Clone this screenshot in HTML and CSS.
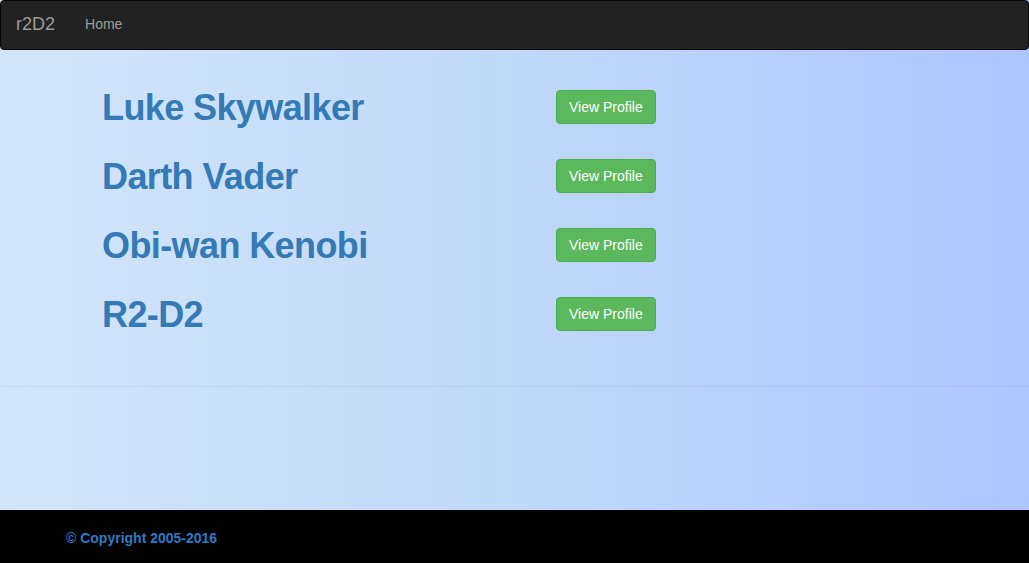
FILE: index.html
```html
<!DOCTYPE html>
<html lang="en">
<head>
<meta charset="utf-8">
<title>r2D2</title>
<link rel="stylesheet" href="styles.css">
</head>
<body>
  <nav class="navbar">
    <a class="brand" href="#">r2D2</a>
    <a class="nav-link" href="#">Home</a>
  </nav>
  <main class="content">
    <div class="person">
      <h1 class="name">Luke Skywalker</h1>
      <a class="btn" href="#">View Profile</a>
    </div>
    <div class="person">
      <h1 class="name">Darth Vader</h1>
      <a class="btn" href="#">View Profile</a>
    </div>
    <div class="person">
      <h1 class="name">Obi-wan Kenobi</h1>
      <a class="btn" href="#">View Profile</a>
    </div>
    <div class="person">
      <h1 class="name">R2-D2</h1>
      <a class="btn" href="#">View Profile</a>
    </div>
  </main>
  <hr class="divider">
  <footer class="footer">
    <p class="copyright">© Copyright 2005-2016</p>
  </footer>
</body>
</html>
```

FILE: styles.css
```css
* { box-sizing: border-box; }

html, body { margin: 0; padding: 0; }

body {
  min-height: 100vh;
  display: flex;
  flex-direction: column;
  font-family: "Liberation Sans", Arial, Helvetica, sans-serif;
  font-size: 14px;
  line-height: 20px;
  background: linear-gradient(to right, #d2e6fa 0%, #c2daf9 45%, #adc6ff 100%);
}

.navbar {
  height: 50px;
  display: flex;
  align-items: flex-start;
  background: #222;
  border: 1px solid #080808;
  border-radius: 4px;
}

.brand {
  padding: 13px 15px 15px 15px;
  font-size: 18px;
  line-height: 20px;
  color: #9d9d9d;
  text-decoration: none;
}

.nav-link {
  padding: 13px 15px 15px 15px;
  color: #9d9d9d;
  text-decoration: none;
}

.content {
  padding: 38px 0 0 102px;
}

.person {
  display: flex;
  align-items: flex-start;
  height: 69px;
}

.name {
  width: 454px;
  margin: 0;
  font-size: 36px;
  line-height: 39.6px;
  font-weight: bold;
  letter-spacing: -0.6px;
  color: #337ab7;
}

.btn {
  margin-top: 2px;
  padding: 6px 12px;
  font-size: 14px;
  line-height: 20px;
  color: #fff;
  background: #5cb85c;
  border: 1px solid #4cae4c;
  border-radius: 4px;
  text-decoration: none;
}

.divider {
  margin: 22px 0 0 0;
  border: 0;
  border-top: 1px solid rgba(40, 80, 140, 0.08);
}

.footer {
  margin-top: auto;
  height: 53px;
  background: #000;
  padding: 18px 0 0 66px;
}

.copyright {
  margin: 0;
  font-weight: bold;
  color: #2e7ac4;
}
```
